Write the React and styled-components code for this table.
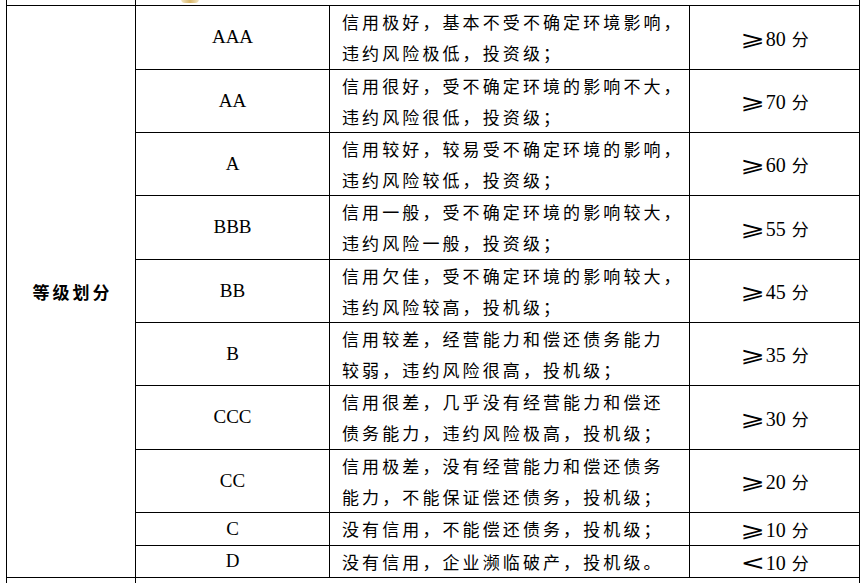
import React from "react";
import styled, { createGlobalStyle } from "styled-components";

const Global = createGlobalStyle`
  html, body { margin: 0; padding: 0; background: #fff; }
  body { font-family: "Noto Sans CJK SC", "Noto Sans", sans-serif; color: #000; }
`;

const Page = styled.div`
  width: 864px;
  height: 583px;
  overflow: hidden;
  padding-left: 6px;
  box-sizing: border-box;
`;

const Table = styled.table`
  border-collapse: collapse;
  table-layout: fixed;
  width: 853px;
`;

const Cell = styled.td`
  border: 1px solid #000;
  padding: 0;
  vertical-align: middle;
  text-align: center;
  box-sizing: border-box;
`;

const EdgeCell = styled(Cell)`
  border-top: none;
  height: 5px;
`;

const BottomCell = styled(Cell)`
  border-bottom: none;
  height: 10px;
`;

const Gold = styled.span`
  display: block;
  margin-left: 45px;
  margin-top: -2px;
  width: 18px;
  height: 4px;
  border-radius: 0 0 8px 8px;
  background: linear-gradient(90deg, #f3e6c4, #d8b66a 50%, #f3e6c4);
`;

const Heading = styled(Cell)`
  font-weight: 700;
  font-size: 17px;
  letter-spacing: 3px;
  padding-left: 3px;
`;

const Grade = styled(Cell)`
  font-family: "Liberation Serif", "Times New Roman", serif;
  font-size: 19px;
`;

const Desc = styled(Cell)`
  text-align: left;
  padding-left: 12px;
  font-size: 17px;
  letter-spacing: 3.1px;
  line-height: 31px;
  white-space: nowrap;
`;

const Score = styled(Cell)`
  font-size: 20px;
  padding-left: 4px;
`;

const Sym = styled.span`
  display: inline-block;
  font-family: "DejaVu Sans", "Noto Sans CJK SC", sans-serif;
  font-size: 21px;
  transform: scaleX(1.4);
  margin-right: 4px;
`;

const Num = styled.span`
  font-family: "Liberation Serif", serif;
`;

const Unit = styled.span`
  font-family: "Noto Sans CJK SC", sans-serif;
  font-size: 17px;
  margin-left: 6px;
`;

const Row = styled.tr`
  height: ${(p) => p.$h}px;
`;

const rows = [
  { g: "AAA", d: ["信用极好，基本不受不确定环境影响，", "违约风险极低，投资级；"], s: "⩾", n: "80", h: 64 },
  { g: "AA", d: ["信用很好，受不确定环境的影响不大，", "违约风险很低，投资级；"], s: "⩾", n: "70", h: 63 },
  { g: "A", d: ["信用较好，较易受不确定环境的影响，", "违约风险较低，投资级；"], s: "⩾", n: "60", h: 63 },
  { g: "BBB", d: ["信用一般，受不确定环境的影响较大，", "违约风险一般，投资级；"], s: "⩾", n: "55", h: 64 },
  { g: "BB", d: ["信用欠佳，受不确定环境的影响较大，", "违约风险较高，投机级；"], s: "⩾", n: "45", h: 63 },
  { g: "B", d: ["信用较差，经营能力和偿还债务能力", "较弱，违约风险很高，投机级；"], s: "⩾", n: "35", h: 63 },
  { g: "CCC", d: ["信用很差，几乎没有经营能力和偿还", "债务能力，违约风险极高，投机级；"], s: "⩾", n: "30", h: 64 },
  { g: "CC", d: ["信用极差，没有经营能力和偿还债务", "能力，不能保证偿还债务，投机级；"], s: "⩾", n: "20", h: 63 },
  { g: "C", d: ["没有信用，不能偿还债务，投机级；"], s: "⩾", n: "10", h: 33 },
  { g: "D", d: ["没有信用，企业濒临破产，投机级。"], s: "<", n: "10", h: 32 },
];

export default function App() {
  return (
    <>
      <Global />
      <Page>
        <Table>
          <colgroup>
            <col style={{ width: 129 }} />
            <col style={{ width: 194 }} />
            <col style={{ width: 360 }} />
            <col style={{ width: 170 }} />
          </colgroup>
          <tbody>
            <Row $h={5}>
              <EdgeCell />
              <EdgeCell colSpan={3}>
                <Gold />
              </EdgeCell>
            </Row>
            {rows.map((r, i) => (
              <Row key={r.g} $h={r.h}>
                {i === 0 && <Heading rowSpan={rows.length}>等级划分</Heading>}
                <Grade>{r.g}</Grade>
                <Desc>
                  {r.d.map((line) => (
                    <div key={line}>{line}</div>
                  ))}
                </Desc>
                <Score>
                  <Sym>{r.s}</Sym>
                  <Num>{r.n}</Num>
                  <Unit>分</Unit>
                </Score>
              </Row>
            ))}
            <Row $h={10}>
              <BottomCell />
              <BottomCell colSpan={3} />
            </Row>
          </tbody>
        </Table>
      </Page>
    </>
  );
}
